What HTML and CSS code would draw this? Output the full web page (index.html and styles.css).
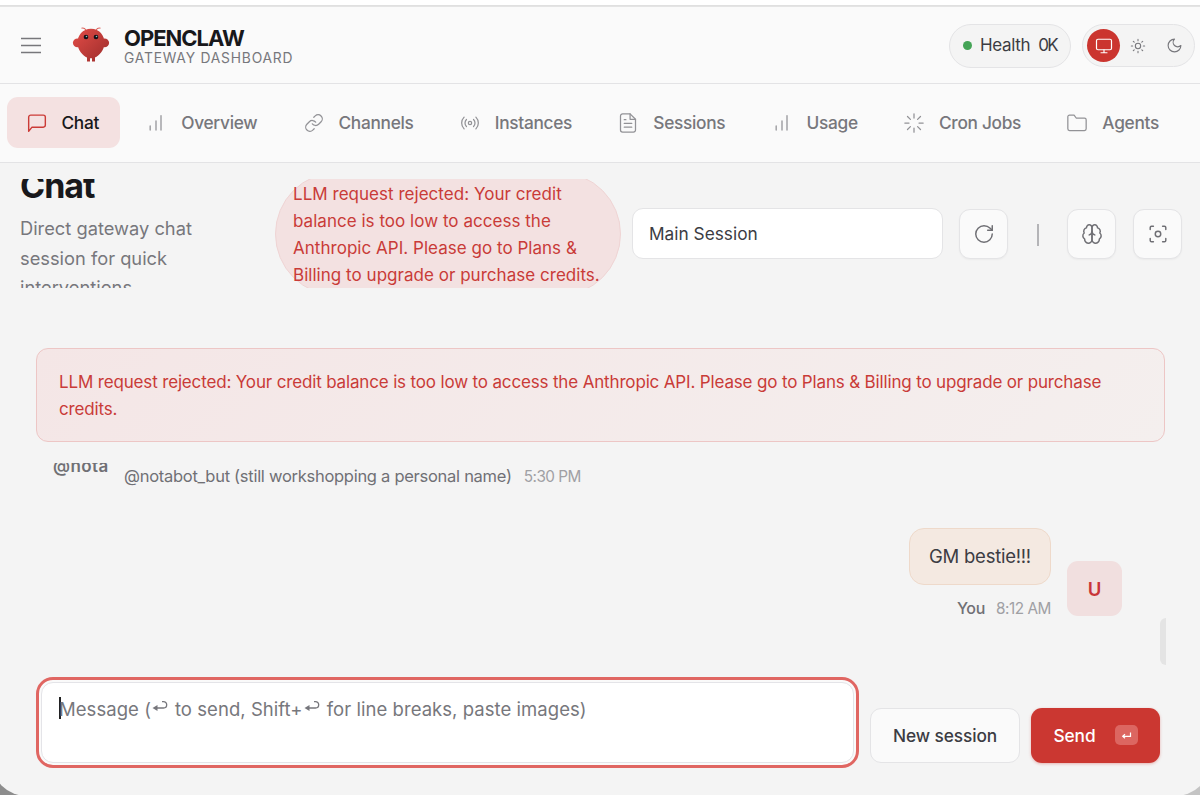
FILE: index.html
```html
<!DOCTYPE html>
<html lang="en">
<head>
<meta charset="utf-8">
<title>OpenClaw Gateway Dashboard</title>
<link rel="stylesheet" href="styles.css">
</head>
<body>
<div class="window">
  <header class="topbar">
    <button class="menu" aria-label="Menu"><svg width="22" height="22" viewBox="0 0 22 22"><path d="M1 3.500h20M1 10.500h20M1 17.500h20"/></svg></button>
    <svg class="logo" width="38" height="36" viewBox="0 0 38 36">
      <defs><linearGradient id="lob" gradientUnits="userSpaceOnUse" x1="4" y1="2" x2="32" y2="32"><stop offset="0" stop-color="#e04b46"/><stop offset="1" stop-color="#a3302e"/></linearGradient></defs>
      <path d="M14 3Q12 .3 9.500 1.300M24 3Q26 .3 28.500 1.300" fill="none" stroke="#dc625c" stroke-width="1.100"/>
      <g fill="url(#lob)">
        <path d="M19 1.800C27.500 1.800 32.500 8.500 32.500 16 32.500 23 27 29 23 30.500v4h-3v-3.200h-2v3.200h-3v-4C11 29 5.500 23 5.500 16 5.500 8.500 10.500 1.800 19 1.800z"/>
        <ellipse cx="5.500" cy="15.800" rx="4.600" ry="4.400"/><ellipse cx="32.500" cy="15.800" rx="4.600" ry="4.400"/>
      </g>
      <circle cx="14" cy="10" r="2.300" fill="#151018"/><circle cx="24" cy="10" r="2.300" fill="#151018"/>
      <circle cx="14.500" cy="9.500" r=".8" fill="#8fc4c0"/><circle cx="24.500" cy="9.500" r=".8" fill="#8fc4c0"/>
    </svg>
    <div class="brand"><div class="brand-name">OPENCLAW</div><div class="brand-sub">GATEWAY DASHBOARD</div></div>
    <div class="health"><i class="dot"></i><span>Health</span><span class="health-val">0K</span></div>
    <div class="theme">
      <span class="theme-on"><svg class="ico" width="18" height="18" viewBox="0 0 24 24"><rect x="2" y="3" width="20" height="14" rx="2"/><path d="M8 21h8M12 17v4"/></svg></span>
      <span class="theme-opt"><svg class="ico" width="16" height="16" viewBox="0 0 24 24"><circle cx="12" cy="12" r="4"/><path d="M12 2v2M12 20v2M4.930 4.930l1.410 1.410M17.660 17.660l1.410 1.410M2 12h2M20 12h2M6.340 17.660l-1.410 1.410M19.070 4.930l-1.410 1.410"/></svg></span>
      <span class="theme-opt"><svg class="ico" width="17" height="17" viewBox="0 0 24 24"><path d="M12 3a6 6 0 0 0 9 9 9 9 0 1 1-9-9Z"/></svg></span>
    </div>
  </header>
  <nav class="tabs">
    <a class="tab active"><svg class="ico" width="20" height="20" viewBox="0 0 24 24"><path d="M22 14.500a2.500 2.500 0 0 1-2.500 2.500H6l-4 5V5a2.500 2.500 0 0 1 2.500-2.500h15A2.500 2.500 0 0 1 22 5z"/></svg><span>Chat</span></a>
    <a class="tab"><svg class="ico" width="20" height="20" viewBox="0 0 24 24"><path d="M18 20.500V3M12 20.500v-11M5 20.500v-5"/></svg><span>Overview</span></a>
    <a class="tab"><svg class="ico" width="20" height="20" viewBox="0 0 24 24"><path d="M10 13a5 5 0 0 0 7.540.54l3-3a5 5 0 0 0-7.070-7.070l-1.720 1.710"/><path d="M14 11a5 5 0 0 0-7.540-.54l-3 3a5 5 0 0 0 7.070 7.070l1.710-1.710"/></svg><span>Channels</span></a>
    <a class="tab"><svg class="ico" width="20" height="20" viewBox="0 0 24 24"><circle cx="12" cy="12" r="2"/><path d="M4.930 19.070a10 10 0 0 1 0-14.140M7.760 16.240a6 6 0 0 1 0-8.480M16.240 7.760a6 6 0 0 1 0 8.480M19.070 4.930a10 10 0 0 1 0 14.140"/></svg><span>Instances</span></a>
    <a class="tab"><svg class="ico" width="20" height="20" viewBox="0 0 24 24"><path d="M14.500 1H5.500A2.500 2.500 0 0 0 3 3.500v17A2.500 2.500 0 0 0 5.500 23h13a2.500 2.500 0 0 0 2.500-2.500V7.500z"/><path d="M14.500 1v6.500H21M16.500 12.500h-9M16.500 17h-9M9.500 8h-2"/></svg><span>Sessions</span></a>
    <a class="tab"><svg class="ico" width="20" height="20" viewBox="0 0 24 24"><path d="M18 20.500V3M12 20.500v-11M5 20.500v-5"/></svg><span>Usage</span></a>
    <a class="tab"><svg class="ico" width="20" height="20" viewBox="0 0 24 24"><path d="M12 1v5M12 18v5M4.200 4.200l3.500 3.500M16.300 16.300l3.500 3.500M1 12h5M18 12h5M4.200 19.800l3.500-3.500M16.300 7.700l3.500-3.500"/></svg><span>Cron Jobs</span></a>
    <a class="tab"><svg class="ico" width="20" height="20" viewBox="0 0 24 24"><path d="M23 19a2 2 0 0 1-2 2H3a2 2 0 0 1-2-2V4.500a2 2 0 0 1 2-2h5.500l2.500 3.500H21a2 2 0 0 1 2 2z"/></svg><span>Agents</span></a>
  </nav>
  <section class="page-head">
    <div class="intro"><h1>Chat</h1><p>Direct gateway chat<br>session for quick<br>interventions.</p></div>
    <div class="err-pill">LLM request rejected: Your credit<br>balance is too low to access the<br>Anthropic API. Please go to Plans &amp;<br>Billing to upgrade or purchase credits.</div>
    <div class="select">Main Session</div>
    <button class="sq refresh"><svg class="ico" width="22" height="22" viewBox="0 0 24 24"><path d="M21 12a9 9 0 1 1-9-9c2.520 0 4.930 1 6.740 2.740L21 8"/><path d="M21 3v5h-5"/></svg></button>
    <i class="sep"></i>
    <button class="sq"><svg class="ico" width="22" height="22" viewBox="0 0 24 24"><path d="M12 5a3 3 0 1 0-5.997.125 4 4 0 0 0-2.526 5.770 4 4 0 0 0 .556 6.588A4 4 0 1 0 12 18Z"/><path d="M12 5a3 3 0 1 1 5.997.125 4 4 0 0 1 2.526 5.770 4 4 0 0 1-.556 6.588A4 4 0 1 1 12 18Z"/><path d="M15 13a4.500 4.500 0 0 1-3-4 4.500 4.500 0 0 1-3 4"/></svg></button>
    <button class="sq focus"><svg class="ico" width="22" height="22" viewBox="0 0 24 24"><circle cx="12" cy="12" r="3"/><path d="M3.500 7V5a1.500 1.500 0 0 1 1.500-1.500h2M17 3.500h2A1.500 1.500 0 0 1 20.500 5v2M20.500 17v2a1.500 1.500 0 0 1-1.500 1.500h-2M7 20.500H5A1.500 1.500 0 0 1 3.500 19v-2"/></svg></button>
  </section>
  <main class="chat">
    <div class="alert">LLM request rejected: Your credit balance is too low to access the Anthropic API. Please go to Plans &amp; Billing to upgrade or purchase<br>credits.</div>
    <div class="bot-row"><div class="bot-avatar"><span>@nota</span></div><span class="bot-name">@notabot_but (still workshopping a personal name)</span><time class="bot-time">5:30 PM</time></div>
    <div class="user-row">
      <div class="user-col"><div class="bubble">GM bestie!!!</div><div class="meta"><span class="you">You</span><time>8:12 AM</time></div></div>
      <div class="avatar">U</div>
    </div>
    <i class="scroll"></i>
  </main>
  <footer class="composer">
    <div class="field"><div class="field-in"><i class="caret"></i><span>Message (</span><svg class="ret" width="18" height="14" viewBox="0 0 18 14"><path d="M6.500 5L1.500 8l5 3z" class="head"/><path d="M4 8h8.500a3.200 3.200 0 0 0 0-6.400h-1.500"/></svg><span>to send, Shift+</span><svg class="ret" width="18" height="14" viewBox="0 0 18 14"><path d="M6.500 5L1.500 8l5 3z" class="head"/><path d="M4 8h8.500a3.200 3.200 0 0 0 0-6.400h-1.500"/></svg><span>for line breaks, paste images)</span></div></div>
    <button class="btn">New session</button>
    <button class="btn send"><span>Send</span><kbd><svg width="11" height="9" viewBox="0 0 11 9"><path d="M9.500 1.500v3.800H2M4 3.300l-2.300 2L4 7.300"/></svg></kbd></button>
  </footer>
</div>
</body>
</html>
```
FILE: styles.css
```css
* { box-sizing: border-box; }
html, body { margin: 0; width: 1200px; height: 795px; overflow: hidden; }
body { background: linear-gradient(90deg, #8d8d8d 50%, #c4c4c4 50%); font-family: Inter, "Noto Sans", sans-serif; color: #3c3c43; -webkit-font-smoothing: antialiased; }
button { font: inherit; padding: 0; border: 0; background: none; color: inherit; }
svg { display: block; flex: none; }
.ico { fill: none; stroke: currentColor; stroke-width: 1.6; stroke-linecap: round; stroke-linejoin: round; }
.window { display: flex; flex-direction: column; height: 796px; margin: 0 -11px 0 -9px; padding: 0 11px 0 9px; background: #f4f4f4; border-radius: 0 0 36px 36px; overflow: hidden; white-space: nowrap; }

.topbar { height: 84px; margin: 0 -11px 0 -9px; padding: 8px 11px 0 9px; display: flex; align-items: center; flex: none; background: linear-gradient(#fff 5px, #dedede 5px, #e6e6e6 7px, #fafafa 7px); border-bottom: 1px solid #e3e3e5; }
.menu { margin-left: 20px; }
.menu path { stroke: #77777b; stroke-width: 1.7; fill: none; }
.logo { margin: 0 14px 2px 30px; }
.brand { width: 180px; padding-top: 3px; }
.brand-name { font-size: 22px; font-weight: 700; line-height: 23px; letter-spacing: -1px; color: #18181b; }
.brand-sub { font-size: 13.800px; line-height: 17px; letter-spacing: .8px; color: #77777c; }
.health { margin-left: auto; width: 122px; height: 44px; display: flex; align-items: center; padding: 0 0 1px 13px; border: 1px solid #e4e4e6; border-radius: 22px; background: #f4f4f4; font-size: 17px; letter-spacing: -.35px; }
.dot { width: 9px; height: 9px; border-radius: 50%; background: #45a457; margin-right: 8px; }
.health-val { margin-left: 8px; letter-spacing: -1.500px; }
.theme { margin: 0 5px 0 11px; width: 113px; height: 43px; display: flex; align-items: center; padding-left: 4px; border: 1px solid #e4e4e6; border-radius: 22px; background: #f4f4f4; color: #77777c; }
.theme-on { width: 33px; height: 33px; border-radius: 50%; display: grid; place-items: center; background: #cb352f; color: #fff; }
.theme-opt { width: 36px; display: grid; place-items: center; }

.tabs { height: 79px; margin: 0 -11px 0 -9px; padding: 0 0 1px 15.500px; display: flex; align-items: center; gap: 6.200px; flex: none; background: #fafafa; border-bottom: 1px solid #e3e3e5; }
.tab { height: 51px; padding: 0 20px; display: flex; align-items: center; gap: 15px; border-radius: 11px; font-size: 17.300px; letter-spacing: -.3px; font-weight: 500; color: #77777c; }
.tab .ico { color: #929296; stroke-width: 1.5; }
.tab.active { padding-right: 21px; background: #f4e1e1; color: #18181b; }
.tab.active .ico { color: #cb3b37; stroke-width: 1.7; }

.page-head { height: 109px; margin-top: 16px; padding-left: 20px; display: flex; align-items: center; flex: none; overflow: hidden; }
.intro { width: 255px; align-self: flex-start; margin-top: -13px; }
.intro h1 { margin: 0; font-size: 34px; line-height: 40px; font-weight: 700; letter-spacing: -1px; color: #18181b; }
.intro p { margin: 8px 0 0; font-size: 18.300px; line-height: 29.500px; color: #77777c; }
.err-pill { width: 346px; height: 124px; padding: 8px 0 0 17px; border: 1px solid #efd4d4; border-radius: 62px; background: #f3e1e1; color: #c93b38; font-size: 17px; letter-spacing: .03px; line-height: 27.300px; flex: none; }
.select { width: 311px; height: 51px; margin-left: 11px; padding-left: 16px; border: 1px solid #e4e4e6; border-radius: 11px; background: #fff; font-size: 17.300px; line-height: 49px; flex: none; }
.sq { width: 49px; height: 50px; display: grid; place-items: center; border: 1px solid #e4e4e6; border-radius: 11px; background: #fafafa; color: #6f6f74; box-shadow: 0 1px 2px rgba(0,0,0,.04); flex: none; }
.refresh { margin-left: 16px; }
.sep { width: 2px; height: 22px; margin: 2px 28px 0 29px; background: #b4b4b7; flex: none; }
.focus { margin-left: 17px; }

.chat { position: relative; height: 389px; padding: 60px 35px 0 36px; flex: none; }
.alert { height: 94px; padding: 20px 22px; border: 1px solid #edc6c5; border-radius: 12px; background: linear-gradient(135deg, #f4e6e6, #f4efee); color: #c93b38; font-size: 17px; letter-spacing: -.157px; line-height: 26.500px; }
.bot-row { height: 54px; margin-top: 21px; display: flex; line-height: 27px; }
.bot-avatar { width: 56px; height: 18px; margin-left: 17px; overflow: hidden; font-size: 17px; font-weight: 600; color: #707075; }
.bot-avatar span { display: block; margin-top: -10px; letter-spacing: .4px; }
.bot-name { margin-left: 15px; font-size: 16.500px; letter-spacing: -.275px; color: #707075; }
.bot-time { margin-left: 12px; font-size: 15.300px; letter-spacing: -.5px; color: #a0a0a4; }
.user-row { display: flex; justify-content: flex-end; padding-right: 43px; margin-top: 11px; }
.bubble { width: 142px; height: 57px; border: 1px solid #eed9ca; border-radius: 15px; background: #f4e9e1; text-align: center; font-size: 18.500px; letter-spacing: -.25px; line-height: 55px; }
.meta { display: flex; justify-content: flex-end; gap: 11px; margin-top: 13px; font-size: 15.300px; letter-spacing: -.45px; line-height: 22px; color: #a0a0a4; }
.you { margin-top: -1px; font-size: 16px; font-weight: 500; letter-spacing: -.3px; color: #707075; }
.avatar { width: 55px; height: 55px; margin: 33px 0 0 16px; border-radius: 11px; background: #f1dfdf; color: #c93539; font-weight: 600; font-size: 18.500px; line-height: 56px; text-align: center; }
.scroll { position: absolute; right: 34px; top: 330px; width: 6px; height: 47px; border-radius: 6px 0 0 6px; background: #e4e4e4; }

.composer { display: flex; padding-left: 36px; flex: none; }
.field { width: 823px; height: 91px; padding: 2px; border: 3px solid #e06662; border-radius: 17px; background: #fafafa; }
.field-in { height: 81px; padding: 14px 0 0 17px; display: flex; border: 1px solid #e4e4e8; border-radius: 12px; background: #fff; font-size: 18.500px; letter-spacing: .05px; line-height: 24px; color: #77777c; }
.caret { width: 2px; height: 22px; margin-right: -2px; background: #222; }
.ret { margin: 3px 6px 0 0; }
.ret path { fill: none; stroke: #77777c; stroke-width: 1.3; }
.ret .head { fill: #77777c; stroke: none; }
.btn { width: 150px; height: 55px; margin: 30.500px 0 0 11px; border: 1px solid #e4e4e6; border-radius: 11px; background: #fafafa; font-size: 17.300px; letter-spacing: -.1px; font-weight: 500; }
.send { width: 129px; display: flex; align-items: center; justify-content: center; gap: 19px; border: 0; background: #cb3731; color: #fff; box-shadow: 0 1px 3px rgba(203,55,49,.35); }
.send kbd { width: 23px; height: 20px; display: grid; place-items: center; border-radius: 5px; background: #dc6661; }
.send kbd path { fill: none; stroke: #fff; stroke-width: 1.2; }
```
